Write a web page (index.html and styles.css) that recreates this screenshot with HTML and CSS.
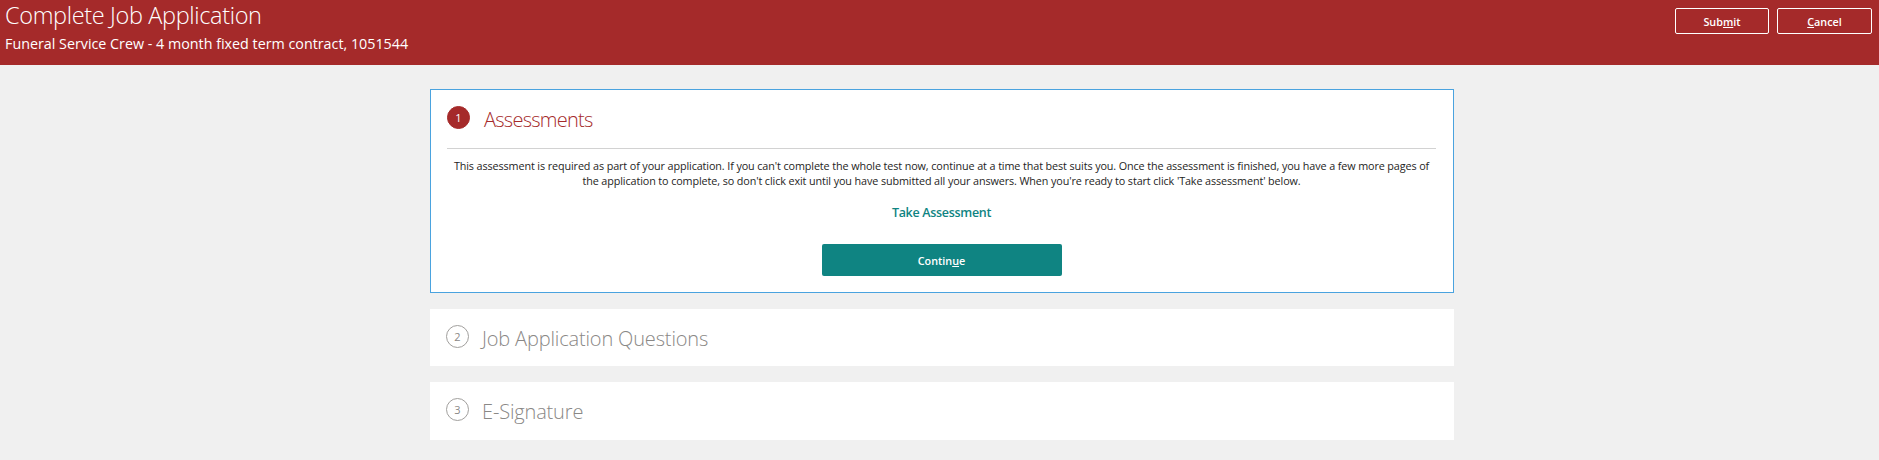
FILE: index.html
```html
<!DOCTYPE html>
<html lang="en">
<head>
    <meta charset="UTF-8">
    <meta name="viewport" content="width=device-width, initial-scale=1.0">
    <title>Complete Job Application</title>
    <link rel="stylesheet" href="styles.css">
</head>
<body>
    <header class="page-header">
        <div class="header-text">
            <h1>Complete Job Application</h1>
            <p>Funeral Service Crew - 4 month fixed term contract, 1051544</p>
        </div>
        <div class="header-actions">
            <button class="header-button" type="button">Sub<u>m</u>it</button>
            <button class="header-button" type="button"><u>C</u>ancel</button>
        </div>
    </header>

    <main class="steps">
        <section class="step step-active">
            <div class="step-title">
                <span class="step-number">1</span>
                <h2>Assessments</h2>
            </div>
            <div class="step-body">
                <p class="step-intro">This assessment is required as part of your application. If you can't complete the whole test now, continue at a time that best suits you. Once the assessment is finished, you have a few more pages of the application to complete, so don't click exit until you have submitted all your answers. When you're ready to start click 'Take assessment' below.</p>
                <a class="assessment-link" href="#assessment">Take Assessment</a>
                <button class="continue-button" type="button">Contin<u>u</u>e</button>
            </div>
        </section>

        <section class="step">
            <div class="step-title">
                <span class="step-number">2</span>
                <h2>Job Application Questions</h2>
            </div>
        </section>

        <section class="step">
            <div class="step-title">
                <span class="step-number">3</span>
                <h2>E-Signature</h2>
            </div>
        </section>
    </main>
</body>
</html>
```

FILE: styles.css
```css
body {
    font-family: "Open Sans", "Noto Sans", Arial, sans-serif;
    background-color: #f0f0f0;
    margin: 0;
    padding: 0;
    color: #323130;
}

.page-header {
    background-color: #a52a2a;
    color: white;
    height: 65px;
    display: flex;
    justify-content: space-between;
    box-sizing: border-box;
    padding: 0 7px 0 5px;
}

.header-text h1 {
    margin: 0;
    font-size: 23.5px;
    font-weight: 300;
    letter-spacing: -0.35px;
    line-height: 30px;
}

.header-text p {
    margin: 0;
    padding-top: 1px;
    font-size: 14.3px;
    font-weight: 400;
    line-height: 26px;
}

.header-actions {
    display: flex;
    gap: 8px;
    padding-top: 8px;
}

.header-button {
    width: 94px;
    height: 26px;
    background: transparent;
    color: white;
    border: 1px solid white;
    border-radius: 2px;
    font-family: inherit;
    font-size: 10.8px;
    font-weight: 600;
    padding: 0;
}

.header-button:last-child {
    width: 95px;
}

.steps {
    width: 1024px;
    margin: 24px 0 0 430px;
    display: flex;
    flex-direction: column;
    gap: 16px;
}

.step {
    background-color: white;
    height: 57px;
}

.step:last-child {
    height: 58px;
}

.step-active {
    height: 204px;
    box-sizing: border-box;
    border: 1px solid #4aa3df;
    padding: 0 17px 0 16px;
}

.step-title {
    display: flex;
    align-items: center;
    gap: 13px;
    height: 57px;
    padding-left: 16px;
}

.step-active .step-title {
    height: 58px;
    padding-left: 0;
    gap: 14px;
    border-bottom: 1px solid #d2d2d2;
}

.step-title h2 {
    margin: 0;
    padding-top: 1px;
    font-size: 20px;
    font-weight: 300;
    letter-spacing: -0.16px;
    color: #8a8886;
}

.step-active .step-title h2 {
    padding-top: 0;
    color: #a52a2a;
    letter-spacing: -0.75px;
}

.step-number {
    width: 23px;
    height: 23px;
    margin-bottom: 3px;
    box-sizing: border-box;
    border: 1px solid #a19f9d;
    border-radius: 50%;
    display: flex;
    align-items: center;
    justify-content: center;
    font-size: 11px;
    color: #8a8886;
}

.step-active .step-number {
    background-color: #a52a2a;
    border-color: #a52a2a;
    color: white;
}

.step-body {
    display: flex;
    flex-direction: column;
    align-items: center;
}

.step-intro {
    margin: 9px 0 0;
    font-size: 10.8px;
    letter-spacing: -0.11px;
    line-height: 15px;
    text-align: center;
    color: #252423;
}

.assessment-link {
    margin-top: 16px;
    color: #0f8482;
    font-size: 12.5px;
    font-weight: 600;
    letter-spacing: -0.3px;
    line-height: 18px;
    text-decoration: none;
}

.continue-button {
    width: 240px;
    height: 32px;
    margin-top: 22px;
    background-color: #0f8482;
    color: white;
    border: none;
    border-radius: 2px;
    font-family: inherit;
    font-size: 10.8px;
    font-weight: 600;
}
```
